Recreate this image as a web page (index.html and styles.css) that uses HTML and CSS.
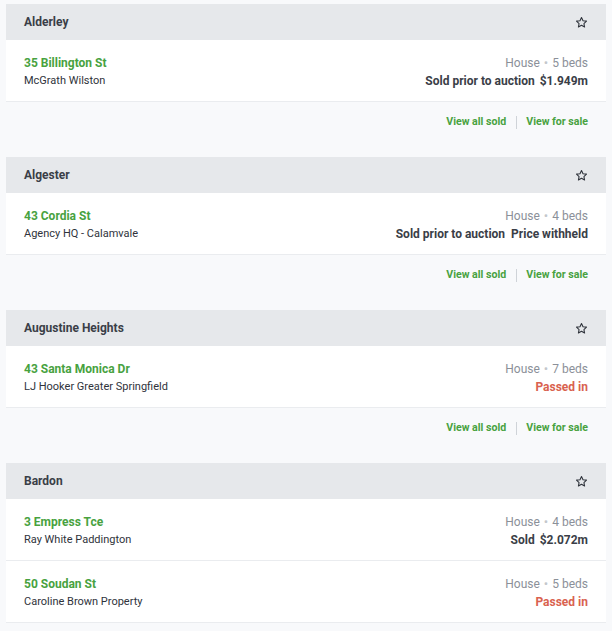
FILE: index.html
```html
<!DOCTYPE html>
<html>
<head>
<meta charset="utf-8">
<link rel="stylesheet" href="styles.css">
</head>
<body>
<div class="list">

  <section class="suburb">
    <div class="suburb-head">
      <span class="suburb-name">Alderley</span>
      <svg class="star" viewBox="0 0 24 24" width="13" height="13"><path d="M12 2.8l2.8 5.9 6.4.8-4.7 4.4 1.2 6.4L12 17.2l-5.7 3.1 1.2-6.4-4.7-4.4 6.4-.8z" fill="none" stroke="#2f333b" stroke-width="2" stroke-linejoin="round"/></svg>
    </div>
    <div class="result">
      <div class="result-left">
        <a class="address">35 Billington St</a>
        <div class="agency">McGrath Wilston</div>
      </div>
      <div class="result-right">
        <div class="meta">House <span class="dot">•</span> 5 beds</div>
        <div class="outcome"><span>Sold prior to auction</span><span class="price">$1.949m</span></div>
      </div>
    </div>
    <div class="suburb-foot">
      <a class="link">View all sold</a><span class="sep"></span><a class="link">View for sale</a>
    </div>
  </section>

  <section class="suburb">
    <div class="suburb-head">
      <span class="suburb-name">Algester</span>
      <svg class="star" viewBox="0 0 24 24" width="13" height="13"><path d="M12 2.8l2.8 5.9 6.4.8-4.7 4.4 1.2 6.4L12 17.2l-5.7 3.1 1.2-6.4-4.7-4.4 6.4-.8z" fill="none" stroke="#2f333b" stroke-width="2" stroke-linejoin="round"/></svg>
    </div>
    <div class="result">
      <div class="result-left">
        <a class="address">43 Cordia St</a>
        <div class="agency">Agency HQ - Calamvale</div>
      </div>
      <div class="result-right">
        <div class="meta">House <span class="dot">•</span> 4 beds</div>
        <div class="outcome"><span>Sold prior to auction</span><span class="price wide">Price withheld</span></div>
      </div>
    </div>
    <div class="suburb-foot">
      <a class="link">View all sold</a><span class="sep"></span><a class="link">View for sale</a>
    </div>
  </section>

  <section class="suburb">
    <div class="suburb-head">
      <span class="suburb-name">Augustine Heights</span>
      <svg class="star" viewBox="0 0 24 24" width="13" height="13"><path d="M12 2.8l2.8 5.9 6.4.8-4.7 4.4 1.2 6.4L12 17.2l-5.7 3.1 1.2-6.4-4.7-4.4 6.4-.8z" fill="none" stroke="#2f333b" stroke-width="2" stroke-linejoin="round"/></svg>
    </div>
    <div class="result">
      <div class="result-left">
        <a class="address">43 Santa Monica Dr</a>
        <div class="agency">LJ Hooker Greater Springfield</div>
      </div>
      <div class="result-right">
        <div class="meta">House <span class="dot">•</span> 7 beds</div>
        <div class="outcome passed">Passed in</div>
      </div>
    </div>
    <div class="suburb-foot">
      <a class="link">View all sold</a><span class="sep"></span><a class="link">View for sale</a>
    </div>
  </section>

  <section class="suburb">
    <div class="suburb-head">
      <span class="suburb-name">Bardon</span>
      <svg class="star" viewBox="0 0 24 24" width="13" height="13"><path d="M12 2.8l2.8 5.9 6.4.8-4.7 4.4 1.2 6.4L12 17.2l-5.7 3.1 1.2-6.4-4.7-4.4 6.4-.8z" fill="none" stroke="#2f333b" stroke-width="2" stroke-linejoin="round"/></svg>
    </div>
    <div class="result">
      <div class="result-left">
        <a class="address">3 Empress Tce</a>
        <div class="agency">Ray White Paddington</div>
      </div>
      <div class="result-right">
        <div class="meta">House <span class="dot">•</span> 4 beds</div>
        <div class="outcome"><span>Sold</span><span class="price">$2.072m</span></div>
      </div>
    </div>
    <div class="result">
      <div class="result-left">
        <a class="address">50 Soudan St</a>
        <div class="agency">Caroline Brown Property</div>
      </div>
      <div class="result-right">
        <div class="meta">House <span class="dot">•</span> 5 beds</div>
        <div class="outcome passed">Passed in</div>
      </div>
    </div>
  </section>

</div>
</body>
</html>
```

FILE: styles.css
```css
* { box-sizing: border-box; }

html, body {
  margin: 0;
  padding: 0;
  background: #f8f9fb;
  font-family: Roboto, "Liberation Sans", Arial, sans-serif;
  color: #2f333b;
}

.list {
  padding: 4px 6px 0 6px;
  display: flex;
  flex-direction: column;
}

.suburb {
  display: flex;
  flex-direction: column;
  margin-bottom: 17px;
}

.suburb-head {
  height: 36px;
  background: #e6e8eb;
  display: flex;
  align-items: center;
  justify-content: space-between;
  padding: 0 18px;
}

.suburb-name {
  font-size: 12px;
  font-weight: 700;
  color: #3a3e47;
}

.star { display: block; }

.result {
  background: #ffffff;
  border-bottom: 1px solid #eaecef;
  display: flex;
  justify-content: space-between;
  padding: 14px 18px 11px 18px;
}

.result-left, .result-right {
  display: flex;
  flex-direction: column;
}

.result-right { align-items: flex-end; }

.address {
  font-size: 12px;
  font-weight: 700;
  color: #48a23f;
  line-height: 18px;
}

.agency {
  font-size: 11px;
  color: #2f333b;
  line-height: 18px;
}

.meta {
  font-size: 12px;
  color: #8b9099;
  line-height: 18px;
  height: 18px;
}

.dot {
  color: #c3c7cc;
  font-size: 13px;
  line-height: 0;
  margin: 0 1px;
}

.outcome {
  font-size: 12px;
  font-weight: 700;
  color: #3a3e47;
  line-height: 18px;
  display: flex;
  gap: 5px;
}

.outcome .wide { margin-left: 1px; }

.outcome.passed { color: #d9624f; }

.suburb-foot {
  display: flex;
  justify-content: flex-end;
  align-items: center;
  padding: 13px 18px 11px 18px;
}

.link {
  font-size: 10.6px;
  font-weight: 700;
  color: #48a23f;
  line-height: 14px;
}

.sep {
  width: 1px;
  height: 13px;
  background: #cfd3d8;
  margin: 0 9px 0 10px;
}
```
